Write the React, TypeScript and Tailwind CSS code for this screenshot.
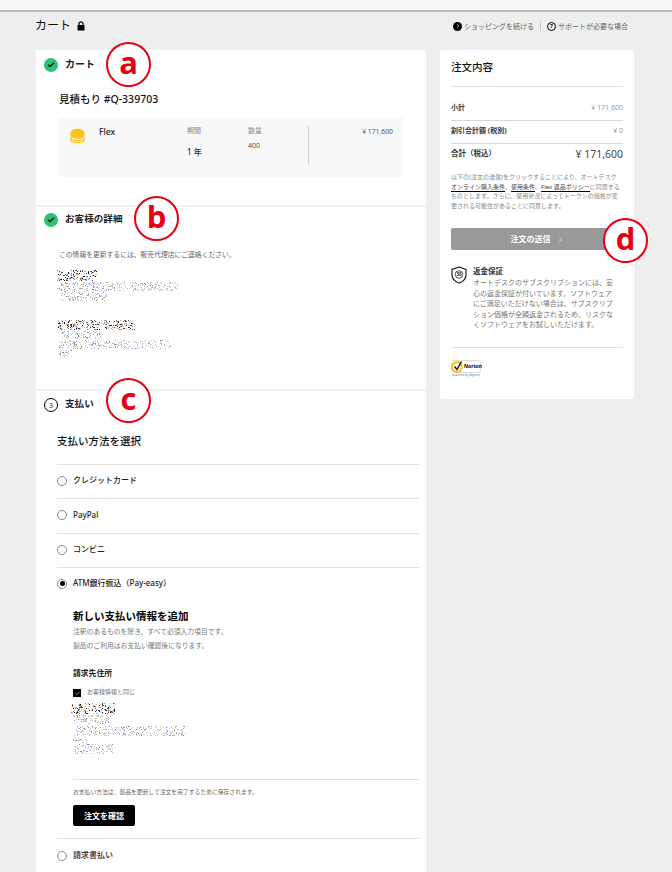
import { Check, ChevronRight } from "lucide-react";

const FONT = "font-['Noto_Sans','Noto_Sans_CJK_JP',sans-serif]";

// scattered dots standing in for the scrubbed address text
const Noise = ({ width, height, rows, seed }: { width: number; height: number; rows: { x: number; y: number; w: number; h: number; dark?: boolean }[]; seed: number }) => {
  let s = seed;
  const rnd = () => {
    s = (s * 16807) % 2147483647;
    return s / 2147483647;
  };
  const pale = ["#b4c8e6", "#e6c4ac", "#a9a9b4", "#c9bfe0", "#9db6d6", "#e2d2a8", "#8a8a94"];
  const strong = ["#111", "#444", "#a8743c", "#34457c", "#999", "#d9b48c", "#aabbdd"];
  const dots: { x: number; y: number; c: string }[] = [];
  rows.forEach((r) => {
    const count = Math.round(r.w * r.h * (r.dark ? 0.3 : 0.26));
    for (let i = 0; i < count; i++) {
      const c = r.dark ? strong : pale;
      dots.push({ x: Math.floor(r.x + rnd() * r.w), y: Math.floor(r.y + rnd() * r.h), c: c[Math.floor(rnd() * c.length)] });
    }
  });
  return (
    <svg width={width} height={height} className="block">
      {dots.map((d, i) => (
        <rect key={i} x={d.x} y={d.y} width="1" height="1" fill={d.c} />
      ))}
    </svg>
  );
};

const Marker = ({ letter, className }: { letter: string; className: string }) => (
  <div className={`absolute flex h-[45px] w-[45px] items-center justify-center rounded-full border-2 border-[#e60012] bg-white font-['Open_Sans',sans-serif] text-[31px] font-bold leading-none text-[#e60012] ${className}`}>
    <span className="mt-[-5px]">{letter}</span>
  </div>
);

const DoneIcon = () => (
  <span className="flex h-[14px] w-[14px] items-center justify-center rounded-full bg-[#2bc275]">
    <Check className="h-[8px] w-[8px] text-black" strokeWidth={3.5} />
  </span>
);

const Radio = ({ on }: { on?: boolean }) => (
  <span className="flex h-[10px] w-[10px] shrink-0 items-center justify-center rounded-full border-[1.5px] border-[#888] bg-white">
    {on && <span className="h-[5px] w-[5px] rounded-full bg-black" />}
  </span>
);

const PayRow = ({ label, on, height }: { label: string; on?: boolean; height: string }) => (
  <div className={`flex items-center gap-[6px] border-t border-[#e2e2e2] pb-[2px] ${height}`}>
    <Radio on={on} />
    <span className="mt-[-1px] text-[8px] font-medium leading-none text-[#222]">{label}</span>
  </div>
);

const LockIcon = () => (
  <svg width="8" height="10" viewBox="0 0 8 10" className="block">
    <path d="M2 4.5V2.8a2 2 0 0 1 4 0V4.5" fill="none" stroke="#000" strokeWidth="1.2" />
    <rect x="0.5" y="4" width="7" height="5.5" rx="0.6" fill="#000" />
  </svg>
);

const Coins = () => (
  <svg width="15" height="16" viewBox="0 0 15 16" className="block">
    <path d="M0.5 9.5c0 2 3 3 7 3s7-1 7-3M0.5 11.5c0 2 3 3 7 3s7-1 7-3" fill="none" stroke="#ffc21c" strokeWidth="1.2" />
    <ellipse cx="7.5" cy="5" rx="7" ry="4.2" fill="#ffc21c" />
    <path d="M0.5 5v2.5c0 2 3 3.2 7 3.2s7-1.2 7-3.2V5z" fill="#ffc21c" />
  </svg>
);

const Shield = () => (
  <svg width="16" height="18" viewBox="0 0 16 18" className="block shrink-0">
    <path d="M8 1 L15 3.5 V9 C15 13 11.5 15.8 8 17 C4.5 15.8 1 13 1 9 V3.5 Z" fill="none" stroke="#111" strokeWidth="1.1" />
    <circle cx="8" cy="8.5" r="3.8" fill="none" stroke="#111" strokeWidth="0.7" />
    <text x="8" y="10.2" textAnchor="middle" fontSize="4.4" fontWeight="700" fill="#111">30</text>
  </svg>
);

const Norton = () => (
  <div className="flex flex-col items-start">
    <div className="flex h-[13px] w-[30px] items-center rounded-[3px] border border-[#ddd] bg-white">
      <svg width="13" height="13" viewBox="0 0 13 13" className="ml-[-1px] block shrink-0">
        <circle cx="6" cy="7" r="4.8" fill="none" stroke="#ffc21c" strokeWidth="2.2" />
        <path d="M3.5 6.5 L6 9.5 L10.5 1.5" fill="none" stroke="#1a1a1a" strokeWidth="1.5" />
      </svg>
      <span className="text-[5px] font-bold leading-none text-black">Norton</span>
    </div>
    <span className="mt-[1px] w-[30px] text-center text-[3px] leading-none text-[#777]">
      powered by <span className="text-[#1a8fd1]">digicert</span>
    </span>
  </div>
);

export default function App() {
  return (
    <div className={`relative h-[872px] overflow-hidden bg-[#eeeeee] ${FONT}`}>
      <div className="h-[12px] border-b-2 border-[#bcbcbc] bg-[#f7f7f7]" />

      <header className="flex h-[38px] items-start justify-between pl-[35px] pr-[44px] pt-[7px]">
        <div className="flex items-center gap-[6px]">
          <span className="text-[12px] leading-[14px] text-[#111]">カート</span>
          <LockIcon />
        </div>
        <div className="flex items-center pt-[2px] text-[7px] leading-none text-[#666]">
          <span className="flex h-[9px] w-[9px] items-center justify-center rounded-full bg-black">
            <ChevronRight className="h-[6px] w-[6px] text-white" strokeWidth={3} />
          </span>
          <span className="ml-[2px]">ショッピングを続ける</span>
          <span className="mx-[6px] h-[10px] w-px bg-[#ccc]" />
          <span className="flex h-[9px] w-[9px] items-center justify-center rounded-full border border-black text-[6px] font-bold text-black">?</span>
          <span className="ml-[2px]">サポートが必要な場合</span>
        </div>
      </header>

      <div className="flex items-start gap-[14px] pl-[36px]">
        <main className="w-[390px] rounded-t-[3px] bg-white">
          {/* cart */}
          <section className="h-[155px] px-[8px] pt-[8px]">
            <div className="flex items-center gap-[7px]">
              <DoneIcon />
              <h2 className="mt-[-3px] text-[10px] font-semibold leading-none text-[#222]">カート</h2>
            </div>
            <div className="pl-[15px]">
              <h3 className="mt-[20px] text-[10.5px] font-medium leading-[14px] text-[#111]">見積もり #Q-339703</h3>
              <div className="mr-[15px] mt-[12px] flex h-[59px] bg-[#f8f8f8] pl-[11px] pt-[8px]">
                <div className="mt-[2px] w-[29px]">
                  <Coins />
                </div>
                <div className="w-[88px] text-[8.5px] font-medium leading-[12px] text-[#222]">Flex</div>
                <div className="w-[61px] text-[7px] leading-[10px] text-[#888]">
                  期間
                  <div className="mt-[11px] text-[8px] font-medium text-[#333]">1 年</div>
                </div>
                <div className="w-[60px] text-[7px] leading-[10px] text-[#888]">
                  数量
                  <div className="mt-[5px] text-[#555]">400</div>
                </div>
                <div className="h-[39px] flex-1 border-l border-[#d5d5d5] pr-[10px] pt-[1px] text-right text-[6.8px] leading-[10px] text-[#555]">¥ 171,600</div>
              </div>
            </div>
          </section>

          {/* customer details */}
          <section className="h-[184px] border-t-2 border-[#f1f1f1] px-[8px] pt-[6px]">
            <div className="flex items-center gap-[7px]">
              <DoneIcon />
              <h2 className="mt-[-3px] text-[9.6px] font-semibold leading-none text-[#222]">お客様の詳細</h2>
            </div>
            <div className="pl-[13px]">
              <p className="ml-[2px] mt-[22px] text-[6.8px] leading-[12px] text-[#666]">この情報を更新するには、販売代理店にご連絡ください。</p>
              <div className="mt-[9px]">
                <Noise
                  width={130}
                  height={92}
                  seed={4711}
                  rows={[
                    { x: 0, y: 0, w: 40, h: 11, dark: true },
                    { x: 0, y: 12, w: 122, h: 9 },
                    { x: 4, y: 21, w: 46, h: 10 },
                    { x: 0, y: 50, w: 78, h: 10, dark: true },
                    { x: 4, y: 61, w: 40, h: 8 },
                    { x: 2, y: 70, w: 112, h: 9 },
                    { x: 2, y: 80, w: 14, h: 8 },
                  ]}
                />
              </div>
            </div>
          </section>

          {/* payment */}
          <section className="border-t-2 border-[#f1f1f1] px-[8px] pt-[7px]">
            <div className="flex items-center gap-[7px]">
              <span className="flex h-[14px] w-[14px] items-center justify-center rounded-full border border-black text-[7px] leading-none text-[#222]">3</span>
              <h2 className="mt-[-3px] text-[9.6px] font-semibold leading-none text-[#222]">支払い</h2>
            </div>
            <div className="pl-[13px]">
              <h3 className="mt-[22px] text-[10.5px] font-medium leading-[14px] text-[#111]">支払い方法を選択</h3>
              <div className="mt-[16px] w-[362px]">
                <PayRow label="クレジットカード" height="h-[34px]" />
                <PayRow label="PayPal" height="h-[35px]" />
                <PayRow label="コンビニ" height="h-[34px]" />
                <PayRow label="ATM銀行振込（Pay-easy）" on height="h-[34px]" />
                <div className="pl-[16px]">
                  <h4 className="mt-[7px] text-[10.5px] font-semibold leading-[16px] text-black">新しい支払い情報を追加</h4>
                  <p className="mt-[1px] text-[6.8px] leading-[14px] text-[#777]">注釈のあるものを除き、すべて必須入力項目です。</p>
                  <p className="text-[6.8px] leading-[14px] text-[#777]">製品のご利用はお支払い確認後になります。</p>
                  <h5 className="mt-[14px] text-[7.8px] font-bold leading-[12px] text-[#222]">請求先住所</h5>
                  <div className="mt-[10px] flex items-center gap-[6px]">
                    <span className="flex h-[8px] w-[8px] items-center justify-center bg-black">
                      <Check className="h-[5px] w-[5px] text-white" strokeWidth={3} />
                    </span>
                    <span className="mt-[-3px] text-[6px] leading-none text-[#666]">お客様情報と同じ</span>
                  </div>
                  <div className="ml-[-8px] mt-[3px]">
                    <Noise
                      width={130}
                      height={56}
                      seed={90210}
                      rows={[
                        { x: 6, y: 3, w: 44, h: 11, dark: true },
                        { x: 8, y: 15, w: 38, h: 9 },
                        { x: 8, y: 26, w: 112, h: 10 },
                        { x: 8, y: 37, w: 14, h: 6 },
                        { x: 10, y: 44, w: 38, h: 10 },
                      ]}
                    />
                  </div>
                  <div className="mt-[23px] border-t border-[#e2e2e2] pt-[8px] text-[5.8px] leading-[8px] text-[#666]">お支払い方法は、製品を更新して注文を完了するために保存されます。</div>
                  <button className="mt-[9px] block h-[21px] w-[62px] rounded-[2px] bg-black text-[8px] font-bold leading-none text-white">注文を確認</button>
                </div>
                <div className="mt-[12px]">
                  <PayRow label="請求書払い" height="h-[36px]" />
                </div>
              </div>
            </div>
          </section>
        </main>

        <aside className="h-[349px] w-[194px] rounded-[3px] bg-white px-[11px] pt-[10px]">
          <h2 className="text-[10.5px] font-medium leading-[14px] text-[#111]">注文内容</h2>
          <div className="mt-[12px] border-t border-[#e2e2e2]" />
          <div className="flex h-[34px] items-center justify-between border-b border-[#d8d8d8] pt-[8px] text-[7px] leading-none">
            <span className="font-bold text-[#333]">小計</span>
            <span className="text-[#999]">¥ 171,600</span>
          </div>
          <div className="flex h-[23px] items-center justify-between border-b border-[#d8d8d8] pb-[4px] text-[7px] leading-none">
            <span className="font-bold text-[#333]">割引合計額 (税別)</span>
            <span className="text-[#999]">¥ 0</span>
          </div>
          <div className="flex h-[24px] items-start justify-between pt-[3px]">
            <span className="mt-[1px] text-[7.5px] font-bold leading-[10px] text-[#333]">合計（税込）</span>
            <span className="mt-[-1px] text-[10.5px] leading-[16px] text-[#444]">¥ 171,600</span>
          </div>
          <p className="mt-[5px] whitespace-nowrap text-[6px] leading-[9.6px] text-[#888]">
            以下の[注文の送信]をクリックすることにより、オートデスク
            <br />
            <span className="border-b border-black text-[#444]">オンライン購入条件</span>、
            <span className="border-b border-black text-[#444]">使用条件</span>、
            <span className="border-b border-black text-[#444]">Flex 返品ポリシー</span>に同意する
            <br />
            ものとします。さらに、使用状況によってトークンの価格が変
            <br />
            更される可能性があることに同意します。
          </p>
          <button className="mt-[17px] flex h-[22px] w-full items-center justify-center gap-[6px] rounded-[2px] bg-[#999999] text-[8px] font-bold leading-none text-white">
            注文の送信
            <ChevronRight className="h-[7px] w-[7px]" />
          </button>
          <div className="mt-[16px] flex gap-[6px]">
            <Shield />
            <div className="w-[141px]">
              <h3 className="text-[7.5px] font-bold leading-[10px] text-[#333]">返金保証</h3>
              <p className="mt-[2px] text-[7px] leading-[10.5px] text-[#777]">オートデスクのサブスクリプションには、安心の返金保証が付いています。ソフトウェアにご満足いただけない場合は、サブスクリプション価格が全額返金されるため、リスクなくソフトウェアをお試しいただけます。</p>
            </div>
          </div>
          <div className="mt-[16px] border-t border-[#e2e2e2] pt-[12px]">
            <Norton />
          </div>
        </aside>
      </div>

      {/* annotation markers */}
      <Marker letter="a" className="left-[106px] top-[42px]" />
      <Marker letter="b" className="left-[134px] top-[196px]" />
      <Marker letter="c" className="left-[106px] top-[378px]" />
      <Marker letter="d" className="left-[603px] top-[218px]" />
    </div>
  );
}
